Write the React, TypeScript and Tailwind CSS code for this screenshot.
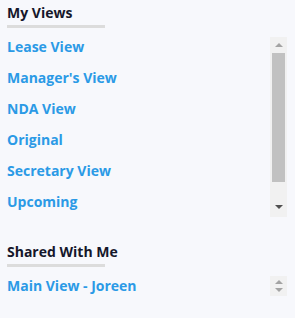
import React from "react";

const myViews = [
  "Lease View",
  "Manager's View",
  "NDA View",
  "Original",
  "Secretary View",
  "Upcoming",
];

const shared = ["Main View - Joreen"];

const Up = (props: { color: string }) => (
  <span
    className="w-0 h-0 border-l-[4px] border-r-[4px] border-b-[4px] border-l-transparent border-r-transparent"
    style={{ borderBottomColor: props.color }}
  />
);

const Down = (props: { color: string }) => (
  <span
    className="w-0 h-0 border-l-[4px] border-r-[4px] border-t-[4px] border-l-transparent border-r-transparent"
    style={{ borderTopColor: props.color }}
  />
);

// classic scrollbar look, drawn by hand (headless has overlay bars)
const BigBar = () => (
  <div className="w-[17px] shrink-0 bg-[#f1f1f1] flex flex-col">
    <div className="h-[16px] flex items-center justify-center">
      <Up color="#a3a3a3" />
    </div>
    <div className="mx-[2px] h-[129px] bg-[#c1c1c1]" />
    <div className="flex-1 flex items-end justify-center pb-[8px]">
      <Down color="#505050" />
    </div>
  </div>
);

const SmallBar = () => (
  <div className="w-[17px] shrink-0 bg-[#f1f1f1] flex flex-col justify-center gap-[4px]">
    <div className="flex justify-center">
      <Up color="#a3a3a3" />
    </div>
    <div className="flex justify-center">
      <Down color="#a3a3a3" />
    </div>
  </div>
);

const Section = (props: {
  title: string;
  items: string[];
  height: string;
  big?: boolean;
}) => {
  return (
    <div>
      <h3 className="text-[14px] leading-[19px] font-bold text-[#15172b]">
        {props.title}
      </h3>
      <div className="mt-[3px] h-[3px] w-[98px] bg-[#dcdcdc]" />
      <div className={`mt-[9px] flex ${props.height}`}>
        <div className="flex-1 overflow-hidden">
          {props.items.map((v) => (
            <div
              key={v}
              className="pb-[12px] text-[14px] leading-[19px] font-bold text-[#2b9ae6] cursor-pointer"
            >
              {v}
            </div>
          ))}
        </div>
        {props.big ? <BigBar /> : <SmallBar />}
      </div>
    </div>
  );
};

export default function App() {
  return (
    <div
      className="w-[295px] h-[318px] bg-[#f7f8fc] pl-[7px] pr-[8px] pt-[3px]"
      style={{ fontFamily: '"Open Sans", "Liberation Sans", sans-serif' }}
    >
      <Section title="My Views" items={myViews} height="h-[180px]" big />
      <div className="mt-[25px]">
        <Section title="Shared With Me" items={shared} height="h-[20px]" />
      </div>
    </div>
  );
}
